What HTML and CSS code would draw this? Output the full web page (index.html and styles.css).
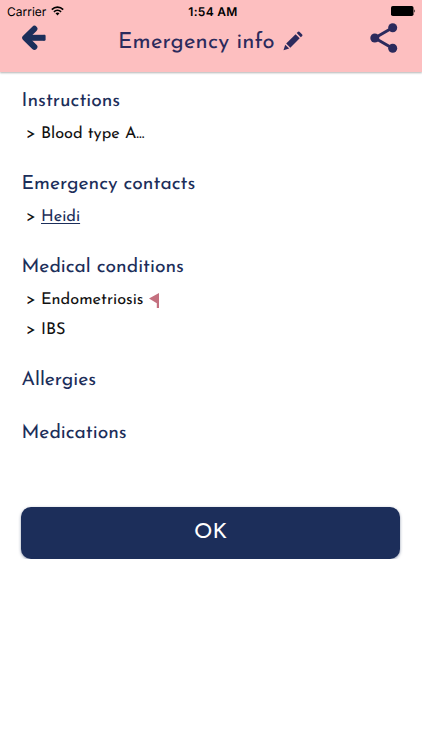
FILE: index.html
```html
<!DOCTYPE html>
<html lang="en">

<head>
    <meta charset="UTF-8">
    <meta name="viewport" content="width=device-width, initial-scale=1.0">
    <title>Emergency info</title>
    <link rel="stylesheet" href="styles.css">
</head>

<body>
    <header class="header">
        <div class="status">
            <div class="carrier">
                <span>Carrier</span>
                <svg width="13" height="10" viewBox="0 0 13 10" fill="none" stroke="#000" stroke-width="1.6">
                    <path d="M0.8 3.6C4 0.3 9 0.3 12.2 3.6" />
                    <path d="M2.9 5.8C5 3.8 8 3.8 10.1 5.8" />
                    <path d="M4.5 7.3Q6.5 5.7 8.5 7.3L6.5 9.4Z" fill="#000" stroke="none" />
                </svg>
            </div>
            <span class="clock">1:54 AM</span>
            <svg class="battery" width="25" height="10" viewBox="0 0 25 10">
                <rect x="0" y="0" width="22.5" height="10" rx="1.8" />
                <path d="M23.3 3.2Q25 5 23.3 6.8Z" />
            </svg>
        </div>
        <div class="bar">
            <svg class="back" width="26" height="28" viewBox="0 0 26 28" fill="none" stroke="#1c2e5a" stroke-linecap="round" stroke-linejoin="round">
                <path d="M13.4 4.8L4.2 13.8L13.4 22.8" stroke-width="6" />
                <path d="M7 13.8H23.4" stroke-width="6" stroke-linecap="butt" />
                <path d="M23.4 12V15.6" stroke-width="2.4" />
            </svg>
            <h1 class="title">Emergency info</h1>
            <svg class="pencil" width="20" height="20" viewBox="0 0 20 20" fill="#2b2a5c">
                <path d="M0.5 19.3L2.2 13.7L6.2 17.6Z" />
                <path d="M3.2 12.6L12.6 3.2L16.7 7.3L7.3 16.7Z" />
                <path d="M13.7 2.1L15 0.8Q15.7 0.2 16.4 0.8L19.2 3.6Q19.8 4.3 19.2 5L17.8 6.2Z" />
            </svg>
            <svg class="share" width="28" height="30" viewBox="0 0 28 30" fill="#2b2a5c">
                <path d="M22.5 4.7L4.8 15L22.5 25.3" fill="none" stroke="#2b2a5c" stroke-width="3" />
                <circle cx="4.8" cy="15" r="4.5" />
                <circle cx="22.7" cy="4.7" r="4.5" />
                <circle cx="22.7" cy="25.3" r="4.5" />
            </svg>
        </div>
    </header>

    <main class="content">
        <section class="group">
            <h2>Instructions</h2>
            <p><span class="mark">&gt;</span><span>Blood type A...</span></p>
        </section>
        <section class="group">
            <h2>Emergency contacts</h2>
            <p><span class="mark">&gt;</span><a class="contact" href="#">Heidi</a></p>
        </section>
        <section class="group">
            <h2>Medical conditions</h2>
            <p>
                <span class="mark">&gt;</span><span>Endometriosis</span>
                <svg class="flag" width="10" height="15" viewBox="0 0 10 15" fill="#c4707f">
                    <path d="M0 5.5L10 0V15H7.8V10.2Z" />
                </svg>
            </p>
            <p><span class="mark">&gt;</span><span>IBS</span></p>
        </section>
        <section class="group">
            <h2>Allergies</h2>
        </section>
        <section class="group">
            <h2>Medications</h2>
        </section>
        <button class="ok" type="button">OK</button>
    </main>
</body>

</html>
```
FILE: styles.css
```css
body {
    margin: 0;
    background-color: white;
    font-family: "Josefin Sans", Lato, sans-serif;
    text-rendering: geometricPrecision;
    color: #111;
}

.header {
    height: 72px;
    background-color: #fdbfc0;
    box-shadow: 0 1px 2px rgba(0, 0, 0, 0.3);
}

.status {
    display: grid;
    grid-template-columns: 1fr auto 1fr;
    align-items: center;
    height: 22px;
    padding: 0 6px 0 7px;
    font-family: Inter, sans-serif;
    font-size: 12px;
    color: black;
}

.carrier {
    display: flex;
    align-items: center;
    gap: 5px;
}

.clock {
    font-weight: 600;
    letter-spacing: 0.3px;
    padding-left: 3px;
}

.battery {
    justify-self: end;
}

.bar {
    display: flex;
    align-items: flex-start;
    padding: 0 24px 0 21px;
}

.back {
    margin-top: 2px;
}

.title {
    width: 156px;
    margin: 6px 0 0 71px;
    font-size: 22px;
    line-height: 30px;
    font-weight: 400;
    letter-spacing: 0.2px;
    white-space: nowrap;
    color: #2b2a5c;
}

.pencil {
    margin: 9px 0 0 9px;
}

.share {
    margin: 1px 0 0 auto;
}

.content {
    padding: 15px 21.5px 0;
}

.group {
    margin-bottom: 23px;
}

.group h2 {
    margin: 0;
    font-size: 19.3px;
    line-height: 30px;
    font-weight: 400;
    color: #1c2e5a;
}

.group p {
    display: flex;
    align-items: center;
    margin: 0;
    padding-left: 4.5px;
    font-size: 16.3px;
    line-height: 30px;
    position: relative;
    top: 3px;
}

.mark {
    width: 15px;
}

.contact {
    color: #1c2e5a;
    text-underline-offset: 2px;
}

.flag {
    margin: 0 0 2px 6px;
}

.ok {
    display: block;
    width: 379px;
    height: 52px;
    margin: 58px 0 0 -0.5px;
    padding: 0 0 2px;
    border: 0;
    border-radius: 10px;
    background-color: #1c2e5a;
    box-shadow: 0 1px 3px rgba(28, 46, 90, 0.5);
    font-family: inherit;
    font-size: 21.5px;
    color: white;
}
```
